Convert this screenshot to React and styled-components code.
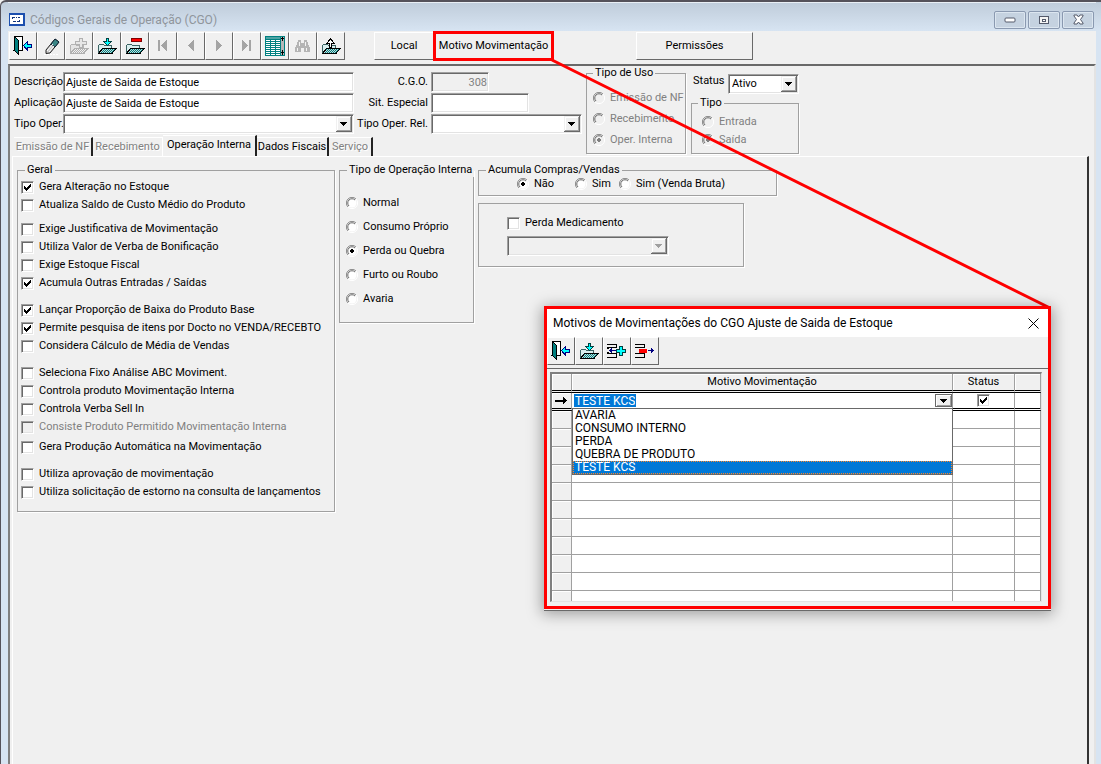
import { useState } from "react";
import { styled, createGlobalStyle, css } from "styled-components";

const svgUrl = (body, w, h) =>
  `url("data:image/svg+xml,${encodeURIComponent(
    `<svg xmlns="http://www.w3.org/2000/svg" width="${w}" height="${h}" viewBox="0 0 ${w} ${h}" shape-rendering="crispEdges">${body}</svg>`
  )}")`;

const arrowButton = (h, color) =>
  svgUrl(
    `<path fill="#f0f0f0" d="M0 0h16v${h}H0z"/><path fill="#fff" d="M1 1h14v1H2v${h - 3}H1z"/><path fill="#696969" d="M15 0h1v${h}H0v-1h15z"/><path fill="#a0a0a0" d="M14 1h1v${h - 2}H1v-1h13z"/><path fill="${color}" d="M4 ${h / 2 - 2}h7v1h-1v1h-1v1h-1v1h-1v-1h-1v-1h-1v-1h-1z"/>`,
    16,
    h
  );

const checkMark = svgUrl(
  `<path d="M1 3h1v1h1v1h1v-1h1v-1h1v-1h1v-1h1v3h-1v1h-1v1h-1v1h-1v1h-1v-1h-1v-1h-1z"/>`,
  9,
  9
);

const radioRing = (fill, dot) =>
  svgUrl(
    `<g shape-rendering="auto" fill="none"><circle cx="6" cy="6" r="4.5" fill="${fill}"/><path d="M2 10A5.5 5.5 0 0 1 10 2" stroke="#8a8a8a"/><path d="M3 9A4.2 4.2 0 0 1 9 3" stroke="#696969"/><path d="M10 2A5.5 5.5 0 0 1 2 10" stroke="#fff"/></g>${
      dot ? `<path fill="${dot}" d="M5 4h2v1h1v2h-1v1h-2v-1h-1v-2h1z"/>` : ""
    }`,
    12,
    12
  );

const App = () => {
  const [tab, setTab] = useState("Operação Interna");
  return (
    <>
      <GlobalStyle />
      <Window>
        <TitleBar>
          <LogoIcon />
          <Title>Códigos Gerais de Operação (CGO)</Title>
          <WinButton aria-label="Minimizar">
            <svg width="12" height="6">
              <rect x="1" y="1" width="10" height="4" rx="1" fill="#fff" stroke="#545a6b" />
            </svg>
          </WinButton>
          <WinButton aria-label="Maximizar">
            <svg width="12" height="10" shapeRendering="crispEdges">
              <path d="M1 1h10v8H1z" fill="#545a6b" />
              <path d="M2 2h8v6H2z" fill="#f4f4f4" />
              <path d="M4 4h4v3H4z" fill="#545a6b" />
              <path d="M5 5h2v1H5z" fill="#fff" />
            </svg>
          </WinButton>
          <WinButton aria-label="Fechar">
            <svg width="13" height="11">
              <path d="M2 1h3l1.500 2L8 1h3v1L8.500 5.500 11 9v1H8L6.500 8 5 10H2V9l2.500-3.500L2 2z" fill="#fff" stroke="#545a6b" />
            </svg>
          </WinButton>
        </TitleBar>
        <Toolbar>
          {mainTools.map(({ label, icon, disabled }) => (
            <ToolButton key={label} aria-label={label} disabled={disabled}>
              <Icon>{icon}</Icon>
            </ToolButton>
          ))}
          <Links>
            <TextButton $width={60}>Local</TextButton>
            <TextButton $width={119} $marked>
              Motivo Movimentação
            </TextButton>
          </Links>
          <TextButton $width={117}>Permissões</TextButton>
        </Toolbar>
        <Form>
          <Header>
            <div>
              <Fields>
                <FieldLabel htmlFor="descricao">Descrição</FieldLabel>
                <Input id="descricao" defaultValue="Ajuste de Saida de Estoque" />
                <FieldLabel htmlFor="cgo" $end>C.G.O.</FieldLabel>
                <Input id="cgo" defaultValue="308" $width={58} disabled />
                <FieldLabel htmlFor="aplicacao">Aplicação</FieldLabel>
                <Input id="aplicacao" defaultValue="Ajuste de Saida de Estoque" />
                <FieldLabel htmlFor="especial" $end>Sit. Especial</FieldLabel>
                <Input id="especial" $width={98} />
                <FieldLabel htmlFor="oper">Tipo Oper.</FieldLabel>
                <Select id="oper" />
                <FieldLabel htmlFor="rel" $end>Tipo Oper. Rel.</FieldLabel>
                <Select id="rel" />
              </Fields>
              <Tabs role="tablist">
                {tabs.map((t) => (
                  <Tab
                    key={t.name}
                    role="tab"
                    aria-selected={tab === t.name}
                    disabled={t.disabled}
                    $width={t.width}
                    $edge={t.edge}
                    onClick={() => setTab(t.name)}
                  >
                    {t.name}
                  </Tab>
                ))}
              </Tabs>
            </div>
            <Group $width={100}>
              <Legend>Tipo de Uso</Legend>
              <Stack $row={21} $pad="7px 0 3px 3px">
                <Option type="radio" name="uso" label="Emissão de NF" disabled />
                <Option type="radio" name="uso" label="Recebimento" disabled />
                <Option type="radio" name="uso" label="Oper. Interna" disabled checked />
              </Stack>
            </Group>
            <StatusArea>
              <StatusRow>
                <label htmlFor="status">Status</label>
                <Select id="status">
                  <option>Ativo</option>
                </Select>
              </StatusRow>
              <Group $width={108}>
                <Legend>Tipo</Legend>
                <Stack $row={18} $pad="3px 0 4px 7px">
                  <Option type="radio" name="tipo" label="Entrada" disabled />
                  <Option type="radio" name="tipo" label="Saída" disabled checked />
                </Stack>
              </Group>
            </StatusArea>
          </Header>
          <Panel>
            <Group $width={318}>
              <Legend $inset>Geral</Legend>
              <General>
                {general.map(({ gap, items }) => (
                  <Stack key={items[0].label} $row={18} $pad={`${gap}px 0 0`}>
                    {items.map((item) => (
                      <Option key={item.label} type="checkbox" {...item} />
                    ))}
                  </Stack>
                ))}
              </General>
            </Group>
            <Group $width={135}>
              <Legend $inset>Tipo de Operação Interna</Legend>
              <Stack $row={24} $pad="14px 0 11px 3px">
                {internalTypes.map((label) => (
                  <Option key={label} type="radio" name="interna" label={label} checked={label === "Perda ou Quebra"} />
                ))}
              </Stack>
            </Group>
            <div>
              <Group $width={299}>
                <Legend $inset>Acumula Compras/Vendas</Legend>
                <Choices>
                  <Option type="radio" name="acumula" label="Não" checked />
                  <Option type="radio" name="acumula" label="Sim" />
                  <Option type="radio" name="acumula" label="Sim (Venda Bruta)" />
                </Choices>
              </Group>
              <LossBox>
                <Option type="checkbox" label="Perda Medicamento" />
                <Select aria-label="Medicamento" disabled />
              </LossBox>
            </div>
          </Panel>
        </Form>
        <Callout width="502" height="252">
          <path d="M2 2 500 250" stroke="#f00" strokeWidth="3" />
        </Callout>
        <ReasonsDialog />
      </Window>
    </>
  );
};

export default App;

const Option = ({ label, type, name, checked, disabled }) => (
  <OptionLabel $disabled={disabled}>
    {type === "radio" ? (
      <Radio type="radio" name={name} defaultChecked={checked} disabled={disabled} />
    ) : (
      <Check type="checkbox" defaultChecked={checked} disabled={disabled} />
    )}
    {label}
  </OptionLabel>
);

const ReasonsDialog = () => {
  const [reason, setReason] = useState("TESTE KCS");
  return (
    <Dialog role="dialog" aria-labelledby="dialog-title">
      <DialogTitle>
        <span id="dialog-title">Motivos de Movimentações do CGO Ajuste de Saida de Estoque</span>
        <CloseButton aria-label="Fechar">
          <svg width="11" height="11">
            <path d="M.5.500l10 10M10.500.500l-10 10" stroke="#000" />
          </svg>
        </CloseButton>
      </DialogTitle>
      <DialogTools>
        {dialogTools.map(({ label, icon }) => (
          <ToolButton key={label} aria-label={label}>
            <Icon>{icon}</Icon>
          </ToolButton>
        ))}
      </DialogTools>
      <GridFrame>
        <Grid>
          <colgroup>
            <col style={{ width: 20 }} />
            <col />
            <col style={{ width: 62 }} />
            <col style={{ width: 26 }} />
          </colgroup>
          <thead>
            <tr>
              <Th />
              <Th>Motivo Movimentação</Th>
              <Th>Status</Th>
              <Th />
            </tr>
          </thead>
          <tbody>
            <tr>
              <RowHead $current>
                <svg width="13" height="9" shapeRendering="crispEdges">
                  <path d="M0 4h8V1h1v1h1v1h1v1h1v1h-1v1h-1v1H9v1H8V6H0z" />
                </svg>
              </RowHead>
              <Td $current>
                <Combo>
                  <ComboInput aria-label="Motivo" value={reason} onChange={(e) => setReason(e.target.value)} />
                  <ComboButton aria-label="Abrir lista">
                    <svg width="7" height="4" shapeRendering="crispEdges">
                      <path d="M0 0h7v1H6v1H5v1H4v1H3V3H2V2H1V1H0z" />
                    </svg>
                  </ComboButton>
                  <List role="listbox" aria-label="Motivos">
                    {reasons.map((r) => (
                      <Item key={r} role="option" aria-selected={r === reason} onClick={() => setReason(r)}>
                        {r}
                      </Item>
                    ))}
                  </List>
                </Combo>
              </Td>
              <Td $current>
                <Check type="checkbox" aria-label="Status" defaultChecked />
              </Td>
              <Td $current />
            </tr>
            {[...Array(11)].map((_, i) => (
              <tr key={i}>
                <RowHead />
                <Td />
                <Td />
                <Td />
              </tr>
            ))}
          </tbody>
        </Grid>
      </GridFrame>
    </Dialog>
  );
};

const Icon = ({ children }) => (
  <svg width="26" height="26" viewBox="1 1 26 26" shapeRendering="crispEdges">
    <defs>
      <pattern id="dither" width="2" height="2" patternUnits="userSpaceOnUse">
        <path d="M0 0h2v2H0z" fill="#c8dcdc" />
        <path d="M0 0h1v1H0zM1 1h1v1H1z" fill="#008080" />
      </pattern>
      <pattern id="ditherGray" width="2" height="2" patternUnits="userSpaceOnUse">
        <path d="M0 0h2v2H0z" fill="#f0f0f0" />
        <path d="M0 0h1v1H0zM1 1h1v1H1z" fill="#b0b0b0" />
      </pattern>
    </defs>
    {children}
  </svg>
);

const LogoIcon = () => (
  <svg width="16" height="13" shapeRendering="crispEdges">
    <path d="M0 0h16v13H0z" fill="#1c4fae" />
    <path d="M1 2h13v9H1z" fill="#fff" />
    <path d="M3 4h3v1H4v1H3zM7 4h1v1H7zM9 4h2v1H9zM4 8h3v1H4zM8 8h3v1H8zM10 7h1v1h-1z" fill="#12357c" />
  </svg>
);

const Folder = ({ gray }) => (
  <>
    <path
      d="M5.500 21.500v-8l1-1h4l1 1h7v3"
      fill={gray ? "#e4e4e4" : "#d9eeee"}
      stroke={gray ? "#b4b4b4" : "#3c6464"}
    />
    <path
      d="M9.500 16.500h13.500l-4 5h-13.500z"
      fill={gray ? "url(#ditherGray)" : "url(#dither)"}
      stroke={gray ? "#b0b0b0" : "#000"}
    />
  </>
);

const door = (
  <>
    <path d="M5 4h9v15h-4v-1h3V5H6v14H4v-1h1z" />
    <path d="M6 5h7v13h-3V8z" fill="#fff" />
    <path d="M5.500 4.500l4 4v14l-4-4z" fill="#008080" stroke="#000" />
    <path d="M14.500 13.500l4-4v3h4v3h-4v3z" fill="#0ff" stroke="#000080" />
  </>
);

const save = (
  <>
    <Folder />
    <path d="M13.500 6.500h2v3h3l-4 4-4-4h3z" fill="#0ff" stroke="#004040" />
  </>
);

const mainTools = [
  { label: "Sair", icon: door },
  {
    label: "Limpar",
    icon: (
      <g shapeRendering="auto">
        <path d="M9 18L18 7l4 3-9 11-4 .500z" fill="#c9c9c9" stroke="#222" />
        <path d="M14 12l4-5 4 3-4 5z" fill="#3b8686" stroke="#123" />
        <path d="M10 19l6-7M12 20l5-6" stroke="#fff" />
        <path d="M7 22.500h15" stroke="#fff" strokeDasharray="2 1" />
      </g>
    ),
  },
  {
    label: "Incluir",
    disabled: true,
    icon: (
      <>
        <Folder gray />
        <path d="M14.500 6.500h3v3h4v3h-4v3h-3v-3h-4v-3h4z" fill="#e6e6e6" stroke="#b0b0b0" />
      </>
    ),
  },
  { label: "Salvar", icon: save },
  {
    label: "Excluir",
    icon: (
      <>
        <Folder />
        <path d="M10 6h11v4H10z" fill="#800000" />
        <path d="M11 7h9v2h-9z" fill="#f00" />
      </>
    ),
  },
  { label: "Primeiro", disabled: true, icon: <path d="M9 8h2v11H9zM18 8v11l-6-5v-1z" fill="#a4a4a4" /> },
  { label: "Anterior", disabled: true, icon: <path d="M17 8v11l-6-5v-1z" fill="#a4a4a4" /> },
  { label: "Próximo", disabled: true, icon: <path d="M11 8v11l6-5v-1z" fill="#a4a4a4" /> },
  { label: "Último", disabled: true, icon: <path d="M9 8v11l6-5v-1zM16 8h2v11h-2z" fill="#a4a4a4" /> },
  {
    label: "Planilha",
    icon: (
      <>
        <path d="M4 4h20v20H4z" fill="#008080" />
        <path d="M5 8h14v1H5zM5 10h14v1H5zM5 12h14v1H5zM5 14h14v1H5zM5 16h14v1H5zM5 18h14v1H5zM5 20h14v1H5zM5 22h14v1H5z" fill="#fff" />
        <path d="M9 7h1v16H9zM14 7h1v16h-1z" fill="#008080" />
        <path d="M5 5h14v2H5z" fill="#4fa3a3" />
        <path d="M20 5h3v18h-3z" fill="#b8b8b8" />
        <path d="M21 5h1v1h1v1h-1v2h-1V7h-1V6h1zM21 18h1v2h1v1h-1v2h-1v-2h-1v-1h1z" />
      </>
    ),
  },
  {
    label: "Pesquisar",
    disabled: true,
    icon: (
      <>
        <path d="M9 8h3v3h3V8h3v2h1v3h1v2h1v5h-6v-4h-3v4H6v-5h1v-2h1v-3h1z" fill="#b4b4b4" />
        <path d="M8 16h1v3H8zM17 16h1v3h-1zM10 10h1v4h-1zM16 10h1v4h-1z" fill="#f4f4f4" />
      </>
    ),
  },
  {
    label: "Exportar",
    icon: (
      <>
        <Folder />
        <path d="M12.500 15.500v-4h-3l4-4.500 4 4.500h-3v4z" fill="#fff" stroke="#000" />
      </>
    ),
  },
];

const dialogTools = [
  { label: "Sair", icon: door },
  { label: "Salvar", icon: save },
  {
    label: "Incluir linha",
    icon: (
      <>
        <path d="M4 7h10v4H4v-1h9V8H4zM4 16h10v5H4v-1h9v-3H4zM4 11h2v1H4zM4 15h2v1H4z" />
        <path d="M6 13h7v1H6zM8 11h1v5H8zM7 12h1v3H7z" fill="#000080" />
        <path d="M16.500 9.500h3v3h3v3h-3v3h-3v-3h-3v-3h3z" fill="#0ff" stroke="#004040" />
      </>
    ),
  },
  {
    label: "Excluir linha",
    icon: (
      <>
        <path d="M4 7h10v4H4v-1h9V8H4zM4 16h10v5H4v-1h9v-3H4z" />
        <path d="M8 12h8v4H8z" fill="#f00" />
        <path d="M17 13h6v1h-6zM20 11h1v5h-1zM21 12h1v3h-1z" fill="#000080" />
      </>
    ),
  },
];

const tabs = [
  { name: "Emissão de NF", width: 79, disabled: true, edge: true },
  { name: "Recebimento", width: 70, disabled: true },
  { name: "Operação Interna", width: 94, edge: true },
  { name: "Dados Fiscais", width: 72, edge: true },
  { name: "Serviço", width: 44, disabled: true, edge: true },
];

const general = [
  {
    gap: 1,
    items: [{ label: "Gera Alteração no Estoque", checked: true }, { label: "Atualiza Saldo de Custo Médio do Produto" }],
  },
  {
    gap: 6,
    items: [
      { label: "Exige Justificativa de Movimentação" },
      { label: "Utiliza Valor de Verba de Bonificação" },
      { label: "Exige Estoque Fiscal" },
      { label: "Acumula Outras Entradas / Saídas", checked: true },
    ],
  },
  {
    gap: 9,
    items: [
      { label: "Lançar Proporção de Baixa do Produto Base", checked: true },
      { label: "Permite pesquisa de itens por Docto no VENDA/RECEBTO", checked: true },
      { label: "Considera Cálculo de Média de Vendas" },
    ],
  },
  {
    gap: 9,
    items: [
      { label: "Seleciona Fixo Análise ABC Moviment." },
      { label: "Controla produto Movimentação Interna" },
      { label: "Controla Verba Sell In" },
      { label: "Consiste Produto Permitido Movimentação Interna", disabled: true },
    ],
  },
  { gap: 2, items: [{ label: "Gera Produção Automática na Movimentação" }] },
  {
    gap: 9,
    items: [
      { label: "Utiliza aprovação de movimentação" },
      { label: "Utiliza solicitação de estorno na consulta de lançamentos" },
    ],
  },
];

const internalTypes = ["Normal", "Consumo Próprio", "Perda ou Quebra", "Furto ou Roubo", "Avaria"];

const reasons = ["AVARIA", "CONSUMO INTERNO", "PERDA", "QUEBRA DE PRODUTO", "TESTE KCS"];

const GlobalStyle = createGlobalStyle`
  * {
    box-sizing: border-box;
  }
  body {
    margin: 0;
    background: #f0f0f0;
    color: #000;
    font: 11px/14px Roboto, Arial, sans-serif;
  }
  button, input, select {
    margin: 0;
    padding: 0;
    color: inherit;
    font: inherit;
    border-radius: 0;
  }
`;

const sunken = css`
  border: 1px solid;
  border-color: #a0a0a0 #fff #fff #a0a0a0;
  box-shadow: inset 1px 1px 0 #696969, inset -1px -1px 0 #e3e3e3;
`;

const Window = styled.div`
  position: relative;
  display: flex;
  flex-direction: column;
  min-height: 100vh;
  padding: 0 5px 0 7px;
  border-top: 2px solid #55525a;
  border-left: 1px solid #55525a;
  border-top-left-radius: 6px;
  background: linear-gradient(#bfccda, #d7e4f2 29px);
  white-space: nowrap;
`;

const TitleBar = styled.header`
  display: flex;
  align-items: center;
  gap: 2px;
  height: 29px;
  padding: 5px 2px 0 1px;
  border-top: 1px solid #e9eff5;
`;

const Title = styled.span`
  flex: 1;
  padding-left: 3px;
  color: #8f959c;
  font-size: 12px;
  line-height: 16px;
`;

const WinButton = styled.button`
  display: flex;
  align-items: center;
  justify-content: center;
  width: 32px;
  height: 18px;
  border: 1px solid #8a99b0;
  border-radius: 2px;
  background: #c5d2e0;
  box-shadow: inset 0 0 0 1px #dce6f0;
`;

const Toolbar = styled.div`
  display: flex;
  height: 33px;
  padding: 1px 1px 4px;
  background: #f0f0f0;
`;

const ToolButton = styled.button`
  display: flex;
  width: 28px;
  height: 28px;
  border: 1px solid;
  border-color: #fff #696969 #696969 #fff;
  background: #f0f0f0;
`;

const Links = styled.div`
  display: flex;
  margin: 0 83px 0 29px;
`;

const TextButton = styled(ToolButton)`
  align-items: center;
  justify-content: center;
  width: ${({ $width }) => $width}px;
  outline: ${({ $marked }) => ($marked ? "3px solid #f00" : "none")};
  outline-offset: -2px;
`;

const Form = styled.main`
  flex: 1;
  display: flex;
  flex-direction: column;
  padding: 0 5px 0 2px;
  border: solid;
  border-width: 2px 2px 0;
  border-color: #696969 #e3e3e3 #fff #808080;
  background: #f0f0f0;
`;

const Header = styled.div`
  display: flex;
  align-items: flex-start;
  gap: 4px;
  height: 90px;
  padding: 0 2px;
`;

const Fields = styled.div`
  display: grid;
  grid-template-columns: 49px 291px 77px 151px;
  grid-auto-rows: 20px;
  gap: 1px 0;
  align-items: center;
  padding-top: 6px;
`;

const FieldLabel = styled.label`
  padding-right: ${({ $end }) => ($end ? 3 : 0)}px;
  text-align: ${({ $end }) => ($end ? "right" : "left")};
`;

const Input = styled.input`
  width: ${({ $width }) => ($width ? `${$width}px` : "100%")};
  height: 20px;
  padding: 0 2px;
  background: #fff;
  ${sunken}
  &:disabled {
    background: #f0f0f0;
    color: #808080;
    text-align: right;
    padding-right: 1px;
  }
`;

const Select = styled.select`
  appearance: none;
  width: 100%;
  height: 20px;
  padding: 0 18px 0 3px;
  background: #fff ${arrowButton(16, "#000")} no-repeat right 1px center;
  ${sunken}
  &:disabled {
    background: #f0f0f0 ${arrowButton(16, "#a0a0a0")} no-repeat right 1px center;
    opacity: 1;
  }
`;

const Tabs = styled.div`
  display: flex;
  align-items: flex-end;
  height: 22px;
`;

const Tab = styled.button`
  width: ${({ $width }) => $width}px;
  height: 19px;
  border: 0;
  border-top: 1px solid #fff;
  border-right: ${({ $edge }) => ($edge ? "2px solid #222" : "1px solid #fff")};
  background: #f0f0f0;
  &[aria-selected="true"] {
    height: 21px;
    padding-bottom: 2px;
  }
  &:disabled {
    color: #808080;
    text-shadow: 1px 1px 0 #fff;
  }
`;

const Group = styled.fieldset`
  width: ${({ $width }) => $width}px;
  min-width: 0;
  margin: 0;
  padding: 0 0 0 3px;
  border: 1px solid #a0a0a0;
  box-shadow: 1px 1px 0 #fff;
`;

const Legend = styled.legend`
  margin-left: ${({ $inset }) => ($inset ? 4 : 3)}px;
  padding: 0 2px;
  background: #f0f0f0;
`;

const Stack = styled.div`
  display: grid;
  grid-auto-rows: ${({ $row }) => $row}px;
  align-items: center;
  padding: ${({ $pad }) => $pad || 0};
`;

const OptionLabel = styled.label`
  display: flex;
  align-items: center;
  gap: 5px;
  color: ${({ $disabled }) => ($disabled ? "#808080" : "#000")};
`;

const Check = styled.input`
  appearance: none;
  flex: none;
  width: 13px;
  height: 13px;
  background: #fff;
  ${sunken}
  &:checked {
    background: #fff ${checkMark} no-repeat center;
  }
  &:disabled {
    background: #f0f0f0;
  }
`;

const Radio = styled.input`
  appearance: none;
  flex: none;
  width: 12px;
  height: 12px;
  background: ${radioRing("#fff")};
  &:checked {
    background: ${radioRing("#fff", "#000")};
  }
  &:disabled {
    background: ${radioRing("#f0f0f0")};
  }
  &:checked:disabled {
    background: ${radioRing("#f0f0f0", "#808080")};
  }
`;

const StatusArea = styled.div`
  padding: 8px 0 0 1px;
`;

const StatusRow = styled.div`
  display: grid;
  grid-template-columns: 35px 71px;
  padding: 0 0 2px 2px;
`;

const Panel = styled.section`
  flex: 1;
  display: flex;
  align-items: flex-start;
  gap: 4px;
  padding: 6px 4px;
  border: solid;
  border-width: 1px 2px 0 1px;
  border-color: #fff #333 #fff #fff;
`;

const General = styled.div`
  padding-bottom: 10px;
`;

const Choices = styled.div`
  display: grid;
  grid-template-columns: 58px 44px auto;
  padding: 0 0 4px 35px;
`;

const LossBox = styled.div`
  display: grid;
  gap: 6px;
  width: 266px;
  margin-top: 7px;
  padding: 12px 74px 10px 28px;
  border: 1px solid #a0a0a0;
  box-shadow: 1px 1px 0 #fff;
`;

const Callout = styled.svg`
  position: absolute;
  top: 56px;
  left: 549px;
  pointer-events: none;
`;

const Dialog = styled.section`
  position: absolute;
  top: 304px;
  left: 543px;
  width: 507px;
  border: 3px solid #f00;
  background: #f0f0f0;
  box-shadow: 0 1px 0 #f0f0f0, 0 2px 0 #696969, 0 3px 14px 2px rgba(0, 0, 0, 0.35);
`;

const DialogTitle = styled.header`
  display: flex;
  align-items: center;
  justify-content: space-between;
  height: 28px;
  padding: 0 9px 0 6px;
  background: #fff;
  font-size: 12px;
  line-height: 16px;
`;

const CloseButton = styled.button`
  display: flex;
  border: 0;
  background: none;
`;

const DialogTools = styled.div`
  display: flex;
  height: 32px;
  border-bottom: 1px solid #696969;
`;

const GridFrame = styled.div`
  height: 230px;
  margin: 3px 6px 4px 3px;
  overflow: hidden;
  border: solid;
  border-width: 2px 1px 1px 2px;
  border-color: #808080 #e3e3e3 #e3e3e3 #808080;
  background: #fff;
`;

const Grid = styled.table`
  width: 100%;
  table-layout: fixed;
  border-spacing: 0;
`;

const Th = styled.th`
  height: 19px;
  padding: 0;
  border-right: 1px solid #a0a0a0;
  border-bottom: 3px double #000;
  background: #f0f0f0;
  box-shadow: inset 1px 1px 0 #fff;
  font-weight: normal;
`;

const Td = styled.td`
  height: 18px;
  padding: 0;
  border-right: 1px solid #a0a0a0;
  border-bottom: ${({ $current }) => ($current ? "3px double #000" : "1px solid #a0a0a0")};
  text-align: center;
  line-height: 0;
`;

const RowHead = styled(Td)`
  background: #f0f0f0;
  box-shadow: inset 1px 1px 0 #fff;
`;

const Combo = styled.div`
  position: relative;
  display: flex;
  justify-content: space-between;
  align-items: center;
  height: 14px;
  padding-left: 2px;
`;

const ComboInput = styled.input`
  field-sizing: content;
  height: 13px;
  padding: 0 1px;
  border: 0;
  background: #0078d7;
  color: #fff;
  font-size: 12px;
`;

const ComboButton = styled.button`
  display: flex;
  align-items: center;
  justify-content: center;
  width: 17px;
  height: 13px;
  border: 1px solid #696969;
  background: #f0f0f0;
  box-shadow: inset 1px 1px 0 #fff, inset -1px -1px 0 #a0a0a0;
`;

const List = styled.ul`
  position: absolute;
  top: 14px;
  left: 0;
  right: -1px;
  margin: 0;
  padding: 0;
  border: 1px solid #696969;
  background: #fff;
  list-style: none;
  text-align: left;
`;

const Item = styled.li`
  padding-left: 2px;
  font-size: 12px;
  line-height: 13px;
  &[aria-selected="true"] {
    background: #0078d7;
    color: #fff;
    outline: 1px dotted #ff8728;
    outline-offset: -1px;
  }
`;
